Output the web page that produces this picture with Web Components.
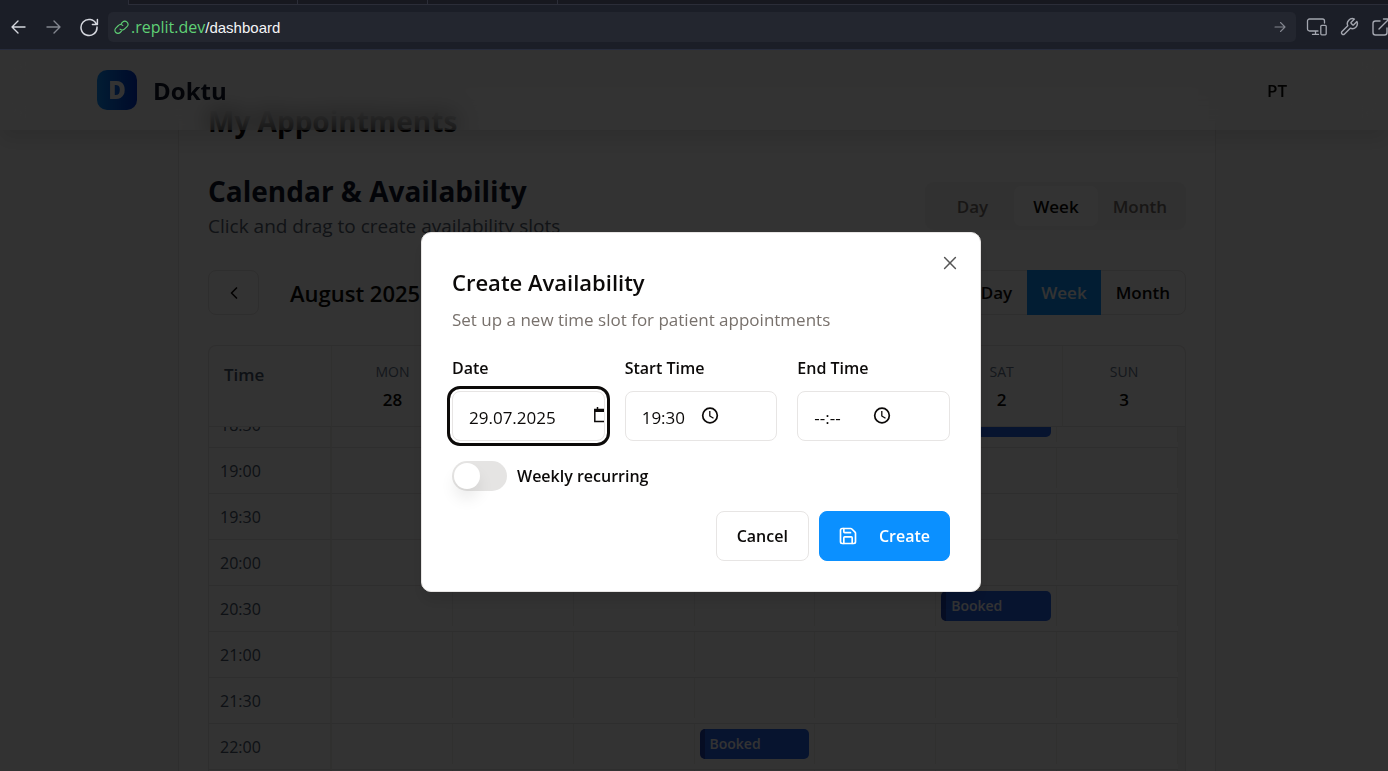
<!DOCTYPE html>
<html lang="en">
<head>
<meta charset="utf-8">
<meta name="viewport" content="width=device-width, initial-scale=1">
<title>Doktu – Dashboard</title>
<style>
  html, body { margin: 0; height: 100%; }
  body {
    display: flex; flex-direction: column; overflow: hidden;
    font-family: "Open Sans", "Noto Sans", sans-serif; font-size: 16px; color: #0c0a09;
    background: #fafafa;
  }
</style>
</head>
<body>
<browser-bar></browser-bar>
<app-view>
  <site-header slot="header"></site-header>
  <calendar-card></calendar-card>
  <modal-dialog slot="overlay" heading="Create Availability" description="Set up a new time slot for patient appointments">
    <field-row>
      <picker-field label="Date" value="29.07.2025" kind="date" active></picker-field>
      <picker-field label="Start Time" value="19:30" kind="time"></picker-field>
      <picker-field label="End Time" value="--:--" kind="time"></picker-field>
    </field-row>
    <toggle-switch label="Weekly recurring"></toggle-switch>
    <dialog-actions></dialog-actions>
  </modal-dialog>
</app-view>

<script>
const define = (name, html, setup) => {
  const tpl = document.createElement('template');
  tpl.innerHTML = html;
  customElements.define(name, class extends HTMLElement {
    connectedCallback() {
      if (this.shadowRoot) return;
      const root = this.attachShadow({ mode: 'open' });
      root.append(tpl.content.cloneNode(true));
      if (setup) setup(this, root);
    }
  });
};

const base = `
  :host, *, *::before, *::after { box-sizing: border-box; }
  button, input { font: inherit; color: inherit; margin: 0; }
  svg { display: block; fill: none; stroke: currentColor; stroke-width: 2; stroke-linecap: round; stroke-linejoin: round; flex: none; }
`;

define('browser-bar', `
<style>${base}
  :host { display: block; flex: none; background: #1b1e27; border-bottom: 1px solid #272c3c; color: #d5d7de; }
  .tabs { height: 5px; display: flex; }
  .tab { background: #17181f; border-left: 1px solid #2b2d38; border-bottom: 1px solid #2b2d38; width: 130px; }
  .tab.active { background: none; border: 0; width: 128px; }
  .tab.wide { width: 169px; }
  .tab.rest { flex: 1; }
  .bar { display: flex; align-items: center; height: 44px; }
  .nav { width: 108px; display: flex; gap: 15px; padding-left: 8px; }
  button { border: 0; background: none; padding: 0; }
  .dim { color: #83868f; }
  .url { flex: 1; display: flex; align-items: center; height: 30px; border-radius: 5px; background: #23262f; padding: 0 8px 0 6px; }
  .link { color: #5fd075; }
  .host { color: #5fd075; font-size: 16px; margin-left: 2px; }
  .path { color: #f4f5f7; font: 15px "Liberation Sans", Arial, sans-serif; }
  a { color: inherit; text-decoration: none; flex: 1; line-height: 20px; }
  .tools { width: 92px; display: flex; gap: 11px; padding-left: 10px; overflow: hidden; color: #a3a6af; }
</style>
<div class="tabs"><div class="tab active"></div><div class="tab wide"></div><div class="tab"></div><div class="tab"></div><div class="tab rest"></div></div>
<div class="bar">
  <div class="nav">
    <button aria-label="Back"><svg width="20" height="20" viewBox="0 0 20 20" style="stroke-width:1.4"><path d="M17 10H4M10 4l-6 6 6 6"/></svg></button>
    <button aria-label="Forward" class="dim"><svg width="20" height="20" viewBox="0 0 20 20" style="stroke-width:1.4"><path d="M4 10h13M11 4l6 6-6 6"/></svg></button>
    <button aria-label="Reload"><svg width="22" height="20" viewBox="0 0 22 20" style="stroke-width:1.5"><path d="M18.3 7.2A8 8 0 1 0 19 10M19.4 2.4v5h-5"/></svg></button>
  </div>
  <div class="url">
    <svg class="link" width="15" height="16" viewBox="0 0 15 16" style="stroke-width:1.1"><path d="M6 10.2a3 3 0 0 0 4.4 0l2.6-2.600a3.100 3.100 0 0 0-4.400-4.400L7.300 4.500"/><path d="M8.800 6.500a3 3 0 0 0-4.400 0L1.800 9.100a3.100 3.100 0 0 0 4.400 4.400l1.300-1.300"/></svg>
    <a href="#dashboard"><span class="host">.replit.dev</span><span class="path">/dashboard</span></a>
    <button aria-label="Go" class="dim"><svg width="16" height="16" viewBox="0 0 16 16" style="stroke-width:1.1"><path d="M3 8h10M8.500 3.500L13 8l-4.500 4.500"/></svg></button>
  </div>
  <div class="tools">
    <button aria-label="Devices"><svg width="22" height="20" viewBox="0 0 22 20" style="stroke-width:1.3"><path d="M12 14H3.500a2 2 0 0 1-2-2V4a2 2 0 0 1 2-2h13a2 2 0 0 1 2 2v2M6.500 17.400h6M9.500 14v3.400"/><rect x="14.800" y="8.300" width="5.400" height="9.500" rx="1"/></svg></button>
    <button aria-label="Tools"><svg width="20" height="20" viewBox="0 0 24 24" style="stroke-width:1.700"><path d="M14.700 6.300a1 1 0 0 0 0 1.400l1.600 1.600a1 1 0 0 0 1.400 0l3.770-3.770a6 6 0 0 1-7.940 7.940l-6.910 6.910a2.120 2.120 0 0 1-3-3l6.910-6.910a6 6 0 0 1 7.940-7.940l-3.760 3.760z"/></svg></button>
    <button aria-label="Open in new tab"><svg width="20" height="20" viewBox="0 0 20 20" style="stroke-width:1.400"><path d="M10 4H5.500A2.500 2.500 0 0 0 3 6.500v9A2.500 2.500 0 0 0 5.500 18h9a2.500 2.500 0 0 0 2.500-2.500V11M9 12L19 2M13.500 2H19v5.500"/></svg></button>
  </div>
</div>`);

define('app-view', `
<style>${base}
  :host { display: block; position: relative; flex: 1; min-height: 0; overflow: hidden; background: #fafafa; }
  .top { position: absolute; inset: 0 0 auto 0; z-index: 1; }
  main { position: relative; z-index: 0; height: 100%; padding: 30px 0 0 6px; }
  .scrim { position: absolute; inset: 0; z-index: 2; background: rgba(0,0,0,.8); display: flex; align-items: center; justify-content: center; padding: 3px 0 0 14px; }
</style>
<div class="top"><slot name="header"></slot></div>
<main><slot></slot></main>
<div class="scrim"><slot name="overlay"></slot></div>`);

define('site-header', `
<style>${base}
  :host { display: block; background: rgba(255,255,255,.2); backdrop-filter: blur(12px); box-shadow: 0 10px 18px rgba(0,0,0,.1); padding-left: 6px; }
  .inner { max-width: 1200px; height: 80px; margin: 0 auto; display: flex; align-items: center; justify-content: space-between; }
  a { display: flex; align-items: center; gap: 16px; color: #0f172a; text-decoration: none; font-weight: 700; font-size: 24px; }
  .logo { width: 40px; height: 40px; border-radius: 10px; display: grid; place-items: center; color: #fff; font-size: 24px; line-height: 1; font-weight: 800; background: linear-gradient(90deg, #0b90ff, #0034d0); }
  button { width: 40px; height: 40px; border: 0; border-radius: 50%; background: #f7f7f7; padding: 0; font-size: 17px; font-weight: 600; }
</style>
<div class="inner">
  <a href="#home"><span class="logo">D</span><span>Doktu</span></a>
  <button>PT</button>
</div>`);

define('calendar-card', `
<style>${base}
  :host { display: flex; flex-direction: column; max-width: 1038px; height: 100%; margin: 0 auto; padding: 22px 29px 0; border: 1px solid #e7e5e4; border-bottom: 0; border-radius: 15px 15px 0 0; background: #fdfdfd; }
  h1, h2, h3, p { margin: 0; }
  h1, h2 { font-size: 28px; line-height: 36px; font-weight: 700; color: #0f172a; }
  h1 { margin-bottom: 34px; color: #0c0a09; }
  p { margin-top: 4px; font-size: 19px; line-height: 26px; color: #57606f; }
  .row { display: flex; justify-content: space-between; align-items: center; }
  .seg { display: flex; height: 48px; padding: 4px; border-radius: 9px; background: #f3f3f2; }
  .seg button { border: 0; border-radius: 7px; background: none; padding: 0 15px; font-size: 17px; font-weight: 600; color: #78716c; }
  .seg button:first-child { padding: 0 26px 0 28px; }
  .seg button.on { background: #fff; color: #0c0a09; padding: 0 19px; }
  .nav { margin: 31px 0 30px; height: 45px; }
  .left { display: flex; align-items: center; gap: 31px; }
  .prev { width: 51px; height: 45px; display: grid; place-items: center; border: 1px solid #e7e5e4; border-radius: 8px; background: none; padding: 0; }
  h3 { font-size: 22px; line-height: 30px; font-weight: 600; white-space: nowrap; }
  .views { display: flex; height: 45px; border: 1px solid #e7e5e4; border-radius: 8px; }
  .views button { border: 0; background: none; padding: 0 15px; font-size: 17px; font-weight: 600; }
  .views button.on { background: #0b90ff; color: #fff; margin: -1px 0; padding: 0 14px; }
</style>
<h1>My Appointments</h1>
<div class="row">
  <div><h2>Calendar &amp; Availability</h2><p>Click and drag to create availability slots</p></div>
  <div class="seg"><button>Day</button><button class="on">Week</button><button>Month</button></div>
</div>
<div class="row nav">
  <div class="left">
    <button class="prev" aria-label="Previous"><svg width="20" height="20" viewBox="0 0 24 24"><path d="m15 18-6-6 6-6"/></svg></button>
    <h3>August 2025</h3>
  </div>
  <div class="views"><button>Day</button><button class="on">Week</button><button>Month</button></div>
</div>
<week-grid></week-grid>`);

define('week-grid', `
<style>${base}
  :host { display: flex; flex-direction: column; flex: 1; min-height: 0; border: 1px solid #e7e5e4; border-bottom: 0; border-radius: 8px 8px 0 0; overflow: hidden; }
  table { border-collapse: separate; border-spacing: 0; table-layout: fixed; width: 100%; }
  .head { flex: none; }
  th { height: 81px; padding: 14px 0 0; vertical-align: top; font-weight: 400; border-bottom: 1px solid #e7e5e4; border-right: 1px solid #ededec; }
  th:last-child { border-right: 0; }
  th:first-child { width: 123px; text-align: left; padding: 17px 0 0 15px; font-size: 17px; line-height: 24px; font-weight: 600; color: #475569; }
  small { display: block; font-size: 14px; line-height: 24px; color: #64748b; }
  b { display: block; font-size: 17px; line-height: 32px; font-weight: 600; }
  .scroll { flex: 1; min-height: 0; overflow: hidden; padding-right: 7px; background: #f6f6f5; }
  .scroll table { background: #fdfdfd; }
  td { height: 46px; padding: 0; vertical-align: top; border-bottom: 1px solid #e7e5e4; }
  td:first-child { width: 123px; border-right: 2px solid #ededec; padding: 2px 0 0 11px; font-size: 16px; line-height: 43px; color: #475569; }
  .slot { height: 40px; border-right: 1px solid #ededec; padding: 5px 5px 0; }
  .booked { height: 30px; border-radius: 5px; border-left: 5px solid #1e40af; background: #2563eb; color: #fff; font-size: 14px; line-height: 30px; font-weight: 600; padding-left: 5px; }
</style>
<table class="head"><thead><tr><th>Time</th></tr></thead></table>
<div class="scroll"><table><tbody></tbody></table></div>`, (host, root) => {
  const days = [['MON', 28], ['TUE', 29], ['WED', 30], ['THU', 31], ['FRI', 1], ['SAT', 2], ['SUN', 3]];
  const booked = { '18:30': 5, '20:30': 5, '22:00': 3 };
  root.querySelector('thead tr').insertAdjacentHTML('beforeend',
    days.map(([d, n]) => `<th><small>${d}</small><b>${n}</b></th>`).join(''));
  const times = ['18:30', '19:00', '19:30', '20:00', '20:30', '21:00', '21:30', '22:00', '22:30', '23:00', '23:30'];
  root.querySelector('tbody').innerHTML = times.map(t => `<tr><td>${t}</td>${days.map((_, i) =>
    `<td><div class="slot">${booked[t] === i ? '<div class="booked">Booked</div>' : ''}</div></td>`).join('')}</tr>`).join('');
  root.querySelector('.scroll').scrollTop = 25;
});

define('modal-dialog', `
<style>${base}
  :host { display: block; position: relative; width: 560px; max-width: 100%; padding: 30px; border: 1px solid #e7e5e4; border-radius: 10px; background: #fff; box-shadow: 0 10px 15px rgba(0,0,0,.1); }
  h2, p { margin: 0; }
  h2 { font-size: 22px; line-height: 38px; font-weight: 600; }
  p { margin: 6px 0 24px; font-size: 17px; line-height: 26px; color: #78716c; }
  .close { position: absolute; top: 20px; right: 20px; padding: 0; border: 0; background: none; color: #555; }
  .body { display: flex; flex-direction: column; gap: 20px; }
</style>
<h2></h2><p></p>
<div class="body"><slot></slot></div>
<button class="close" aria-label="Close"><svg width="20" height="20" viewBox="0 0 24 24" style="stroke-width:1.800"><path d="M18.500 5.500l-13 13M5.500 5.500l13 13"/></svg></button>`, (host, root) => {
  root.querySelector('h2').textContent = host.getAttribute('heading');
  root.querySelector('p').textContent = host.getAttribute('description');
});

define('field-row', `
<style>
  :host { display: grid; grid-template-columns: repeat(3, minmax(0, 1fr)); gap: 20px; }
</style><slot></slot>`);

define('picker-field', `
<style>${base}
  :host { display: block; }
  label { display: block; font-size: 16px; line-height: 22px; font-weight: 600; margin-bottom: 12px; white-space: nowrap; }
  .box { display: flex; align-items: center; height: 50px; border: 1px solid #e7e5e4; border-radius: 8px; padding-left: 16px; overflow: hidden; }
  :host([active]) .box { outline: 3px solid #0c0a09; outline-offset: 2px; }
  input { border: 0; outline: 0; padding: 2px 0 0; background: none; font-size: 17px; line-height: 24px; height: 26px; width: 58px; flex: none; }
  :host([kind=date]) input { width: 121px; }
</style>
<label for="f"></label>
<div class="box"><input id="f" type="text"></div>`, (host, root) => {
  root.querySelector('label').textContent = host.getAttribute('label');
  root.querySelector('input').value = host.getAttribute('value');
  root.querySelector('.box').insertAdjacentHTML('beforeend', host.getAttribute('kind') === 'date'
    ? '<svg width="20" height="20" viewBox="0 0 20 20" style="stroke-width:1.500;stroke-linecap:butt;stroke-linejoin:miter"><path d="M4.800 3.500h13v12h-13zM7.500 1v3M15 1v3"/><path d="M4.500 4.500h13.500" style="stroke-width:3"/></svg>'
    : '<svg width="20" height="20" viewBox="0 0 20 20" style="stroke-width:1.700;stroke-linecap:butt"><circle cx="10" cy="9.500" r="7.300"/><path d="M9.800 5v5l3.700 2.300" style="stroke-width:1.300"/></svg>');
});

define('toggle-switch', `
<style>${base}
  :host { display: flex; align-items: center; gap: 10px; height: 30px; }
  input { appearance: none; width: 55px; height: 30px; border-radius: 15px; background: #e5e4e3; padding: 2px; flex: none; }
  input::before { content: ""; display: block; width: 26px; height: 26px; border-radius: 50%; background: #fff; box-shadow: 0 10px 15px rgba(0,0,0,.08); }
  input:checked { background: #0b90ff; }
  input:checked::before { margin-left: 25px; }
  label { font-weight: 600; font-size: 16px; line-height: 24px; }
</style>
<input type="checkbox" role="switch" id="s"><label for="s"></label>`, (host, root) => {
  root.querySelector('label').textContent = host.getAttribute('label');
});

define('dialog-actions', `
<style>${base}
  :host { display: flex; justify-content: flex-end; gap: 10px; }
  button { display: flex; align-items: center; height: 50px; padding: 0 20px; border: 1px solid #e7e5e4; border-radius: 8px; background: #fff; font-size: 16px; font-weight: 600; }
  .primary { border-color: #0b90ff; background: #0b90ff; color: #fff; gap: 21px; padding: 0 19px 0 18px; }
</style>
<button>Cancel</button>
<button class="primary"><svg width="20" height="20" viewBox="0 0 24 24"><path d="M15.200 3a2 2 0 0 1 1.400.600l3.800 3.800a2 2 0 0 1 .600 1.400V19a2 2 0 0 1-2 2H5a2 2 0 0 1-2-2V5a2 2 0 0 1 2-2z"/><path d="M17 21v-7a1 1 0 0 0-1-1H8a1 1 0 0 0-1 1v7"/><path d="M7 3v4a1 1 0 0 0 1 1h7"/></svg>Create</button>`);
</script>
</body>
</html>
